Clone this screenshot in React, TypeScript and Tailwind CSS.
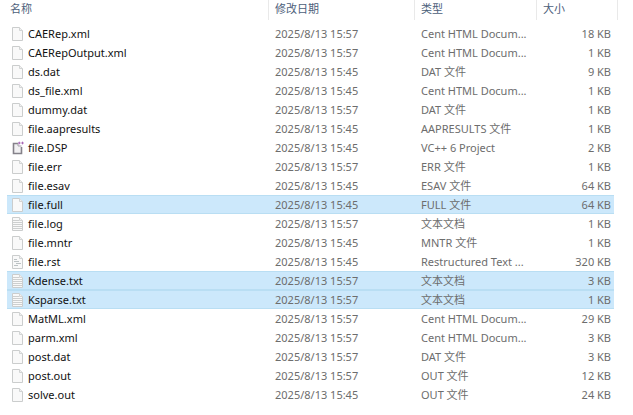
import React, { useState } from "react";
import clsx from "clsx";

type IconKind = "blank" | "text" | "rst" | "dsp";

interface FileEntry {
  name: string;
  date: string;
  type: string;
  size: string;
  icon?: IconKind;
}

const files: FileEntry[] = [
  { name: "CAERep.xml", date: "2025/8/13 15:57", type: "Cent HTML Docum...", size: "18 KB" },
  { name: "CAERepOutput.xml", date: "2025/8/13 15:57", type: "Cent HTML Docum...", size: "1 KB" },
  { name: "ds.dat", date: "2025/8/13 15:45", type: "DAT 文件", size: "9 KB" },
  { name: "ds_file.xml", date: "2025/8/13 15:45", type: "Cent HTML Docum...", size: "1 KB" },
  { name: "dummy.dat", date: "2025/8/13 15:57", type: "DAT 文件", size: "1 KB" },
  { name: "file.aapresults", date: "2025/8/13 15:45", type: "AAPRESULTS 文件", size: "1 KB" },
  { name: "file.DSP", date: "2025/8/13 15:45", type: "VC++ 6 Project", size: "2 KB", icon: "dsp" },
  { name: "file.err", date: "2025/8/13 15:57", type: "ERR 文件", size: "1 KB" },
  { name: "file.esav", date: "2025/8/13 15:45", type: "ESAV 文件", size: "64 KB" },
  { name: "file.full", date: "2025/8/13 15:45", type: "FULL 文件", size: "64 KB" },
  { name: "file.log", date: "2025/8/13 15:57", type: "文本文档", size: "1 KB", icon: "text" },
  { name: "file.mntr", date: "2025/8/13 15:45", type: "MNTR 文件", size: "1 KB" },
  { name: "file.rst", date: "2025/8/13 15:45", type: "Restructured Text ...", size: "320 KB", icon: "rst" },
  { name: "Kdense.txt", date: "2025/8/13 15:57", type: "文本文档", size: "3 KB", icon: "text" },
  { name: "Ksparse.txt", date: "2025/8/13 15:57", type: "文本文档", size: "1 KB", icon: "text" },
  { name: "MatML.xml", date: "2025/8/13 15:57", type: "Cent HTML Docum...", size: "29 KB" },
  { name: "parm.xml", date: "2025/8/13 15:57", type: "Cent HTML Docum...", size: "3 KB" },
  { name: "post.dat", date: "2025/8/13 15:57", type: "DAT 文件", size: "3 KB" },
  { name: "post.out", date: "2025/8/13 15:57", type: "OUT 文件", size: "12 KB" },
  { name: "solve.out", date: "2025/8/13 15:45", type: "OUT 文件", size: "24 KB" },
];

function FileIcon({ kind = "blank" }: { kind?: IconKind }) {
  if (kind === "dsp") {
    return (
      <svg className="w-3 h-3.5 shrink-0" viewBox="0 0 12 14" fill="none" aria-hidden="true">
        <path d="M6 2.5H1.5v10h8V6" fill="#f1f0f2" stroke="#85828a" strokeWidth="1.6" />
        <path d="M6 2.5V5h3.5" stroke="#a5a2aa" />
        <path d="M6 2h2.6M7.3.7v2.6M9.2 2h2.6M10.5.7v2.6" stroke="#a765b5" strokeWidth="1" />
      </svg>
    );
  }
  return (
    <svg className="w-3 h-3.5 shrink-0" viewBox="0 0 12 14" fill="none" aria-hidden="true">
      <path d="M.5.5h7l3 3v10H.5z" fill="#f9f9f9" stroke="#cbcdcd" />
      <path d="M7.5.5v3h3" fill="#f0f0f0" stroke="#d2d4d4" />
      {kind === "text" && (
        <path d="M1 3.5h6M1 5.5h9M1 7.5h9M1 9.5h9M1 11.5h9" stroke="#cdcfcf" />
      )}
      {kind === "rst" && (
        <path d="M2 4.5h3M2 6.5h5M4 8.5h5M2 10.5h4" stroke="#bcc2c4" />
      )}
    </svg>
  );
}

export default function App() {
  const [selected, setSelected] = useState(["file.full", "Kdense.txt", "Ksparse.txt"]);

  const toggle = (name: string) => {
    setSelected(prev =>
      prev.includes(name) ? prev.filter(item => item !== name) : [...prev, name]
    );
  };

  return (
    <div className="min-h-screen bg-white pl-[7px] pr-[15px] font-['Noto_Sans','Noto_Sans_CJK_SC',sans-serif] text-[11px] leading-4 text-[#6d6d6d]">
      <table className="w-full table-fixed border-separate border-spacing-0 whitespace-nowrap">
        <colgroup>
          <col />
          <col className="w-[146px]" />
          <col className="w-[122px]" />
          <col className="w-[77px]" />
          <col className="w-1" />
        </colgroup>
        <thead>
          <tr className="h-5 text-left text-[#4c607a]">
            <th className="border-r border-[#e9e9e9] p-0 pl-[3px] pb-0.5 font-normal">名称</th>
            <th className="border-r border-[#e9e9e9] p-0 pl-1.5 pb-0.5 font-normal">修改日期</th>
            <th className="border-r border-[#e9e9e9] p-0 pl-1.5 pb-0.5 font-normal">类型</th>
            <th className="p-0 pl-1.5 pb-0.5 font-normal">大小</th>
            <td className="border-r border-[#e9e9e9] p-0" />
          </tr>
        </thead>
        <tbody>
          <tr className="h-1" aria-hidden="true">
            <td colSpan={5} className="p-0" />
          </tr>
          {files.map(file => {
            const isSelected = selected.includes(file.name);
            const cell = clsx(
              "border-y p-0",
              isSelected ? "border-[#b9def3] bg-[#cce8fb]" : "border-transparent"
            );

            return (
              <tr
                key={file.name}
                className="h-[19px] cursor-default"
                aria-selected={isSelected}
                onClick={() => toggle(file.name)}
              >
                <td className={cell}>
                  <div className="flex items-center gap-1 pl-[5px] text-[#111111]">
                    <FileIcon kind={file.icon} />
                    {file.name}
                  </div>
                </td>
                <td className={clsx(cell, "pl-1.5")}>{file.date}</td>
                <td className={clsx(cell, "pl-1.5")}>{file.type}</td>
                <td className={clsx(cell, "pr-[3px] text-right")}>{file.size}</td>
                <td className="p-0" />
              </tr>
            );
          })}
        </tbody>
      </table>
    </div>
  );
}
